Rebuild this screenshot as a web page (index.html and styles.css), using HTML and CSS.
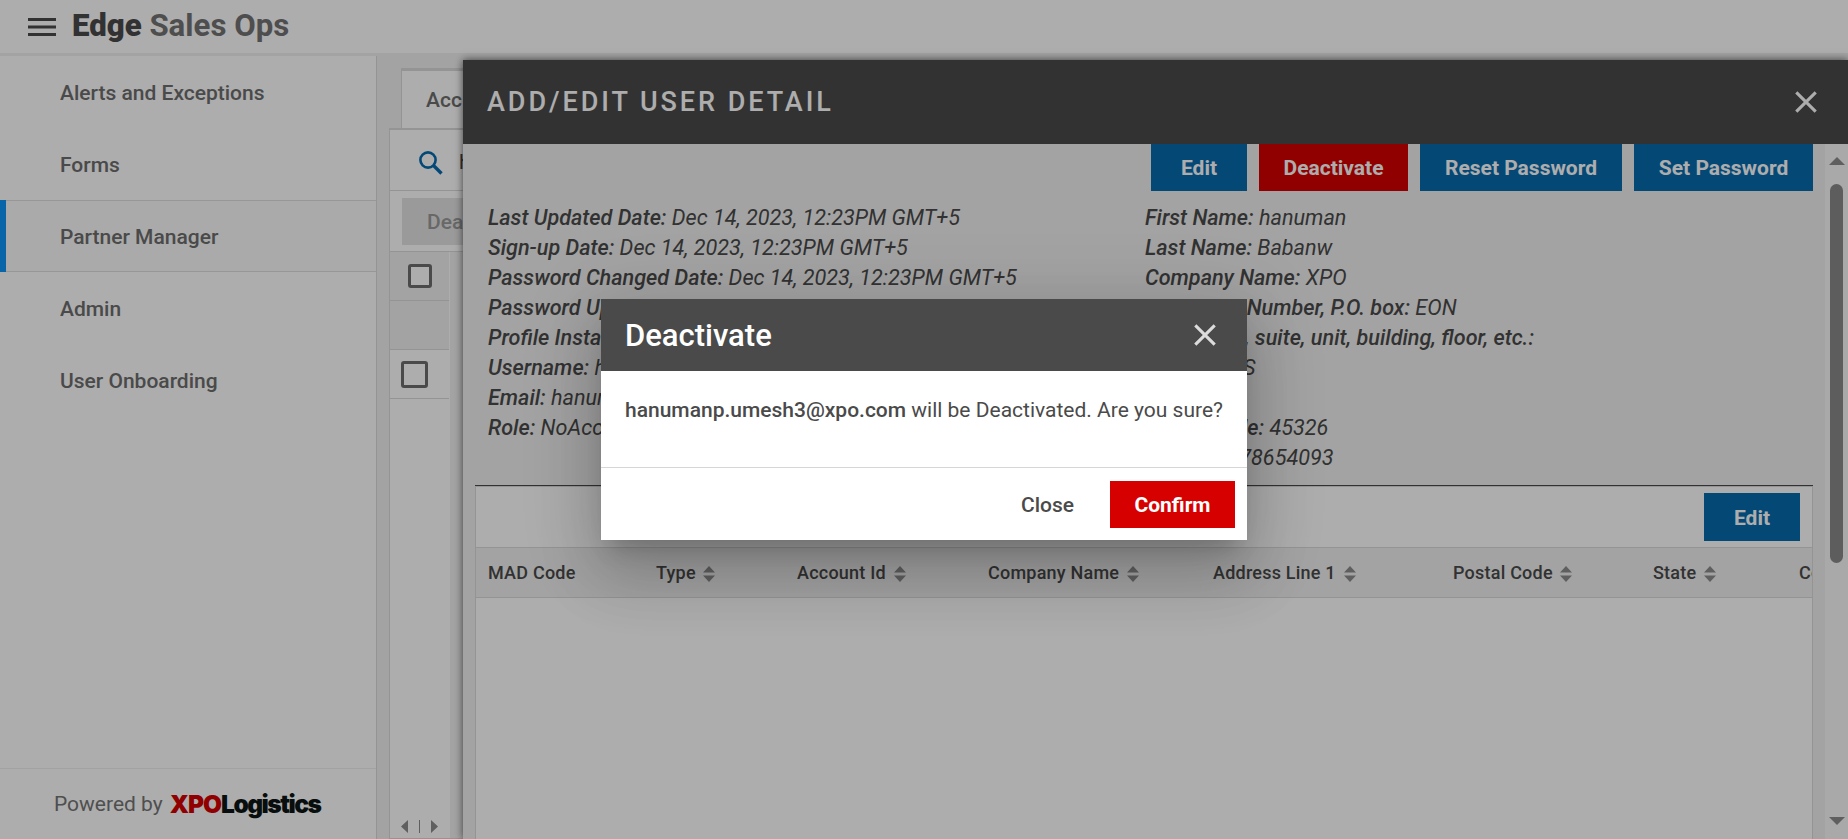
FILE: index.html
```html
<!DOCTYPE html>
<html lang="en">
<head>
<meta charset="utf-8">
<title>Edge Sales Ops</title>
<link rel="stylesheet" href="styles.css">
</head>
<body>
<svg width="0" height="0" class="defs">
  <symbol id="sort" viewBox="0 0 12 16"><path d="M6 0l6 6.5H0zM0 9.5h12L6 16z"/></symbol>
  <symbol id="cross" viewBox="0 0 22 22"><path d="M1.3 1.3l19.4 19.4M20.7 1.3L1.3 20.7" fill="none" stroke="currentColor" stroke-width="3.1"/></symbol>
</svg>
<div class="app">
  <header class="topbar">
    <svg class="menu" viewBox="0 0 28 18"><path d="M0 0h28v3H0zM0 7.5h28v3H0zM0 15h28v3H0z"/></svg>
    <h1 class="brand"><b>Edge</b> Sales Ops</h1>
  </header>
  <div class="content">
    <aside class="sidebar">
      <nav class="nav">
        <a class="nav-item">Alerts and Exceptions</a>
        <a class="nav-item">Forms</a>
        <a class="nav-item active">Partner Manager</a>
        <a class="nav-item">Admin</a>
        <a class="nav-item">User Onboarding</a>
      </nav>
      <div class="powered">Powered by <span class="logo"><span class="xpo">XPO</span><span class="logi">Logistics</span></span></div>
    </aside>
    <main class="main">
      <div class="tab">Acc</div>
      <section class="panel">
        <div class="search">
          <svg class="search-icon" viewBox="0 0 24 24"><circle cx="9" cy="9" r="7.6" fill="none" stroke="currentColor" stroke-width="2.6"/><path d="M14.5 14.5l8 8" stroke="currentColor" stroke-width="3.4"/></svg>
          <span>h</span>
        </div>
        <div class="actions"><span class="btn-disabled">Dea</span></div>
        <div class="rows">
          <div class="row grey first"><i class="check small"></i></div>
          <div class="row grey"></div>
          <div class="row"><i class="check"></i></div>
          <div class="pager">
            <svg viewBox="0 0 38 13"><path d="M8 0v13L1 6.5zM19 0h1v13h-1zM31 0v13l7-6.5z"/></svg>
          </div>
        </div>
      </section>
    </main>
  </div>
</div>

<section class="drawer">
  <header class="drawer-head">
    <h2>ADD/EDIT USER DETAIL</h2>
    <svg class="cross"><use href="#cross"/></svg>
  </header>
  <div class="drawer-body">
    <div class="drawer-main">
      <div class="buttons">
        <button class="btn wide">Edit</button>
        <button class="btn red deactivate">Deactivate</button>
        <button class="btn reset">Reset Password</button>
        <button class="btn set">Set Password</button>
      </div>
      <div class="details">
        <div class="col">
          <p><b>Last Updated Date:</b> Dec 14, 2023, 12:23PM GMT+5</p>
          <p><b>Sign-up Date:</b> Dec 14, 2023, 12:23PM GMT+5</p>
          <p><b>Password Changed Date:</b> Dec 14, 2023, 12:23PM GMT+5</p>
          <p><b>Password Up</b></p>
          <p><b>Profile Insta</b></p>
          <p><b>Username:</b> ha</p>
          <p><b>Email:</b> hanum</p>
          <p><b>Role:</b> NoAcc</p>
        </div>
        <div class="col">
          <p><b>First Name:</b> hanuman</p>
          <p><b>Last Name:</b> Babanw</p>
          <p><b>Company Name:</b> XPO</p>
          <p><b>Street and Number, P.O. box:</b> EON</p>
          <p><b>Apartment, suite, unit, building, floor, etc.:</b></p>
          <p><b>City:</b> TEXAS</p>
          <p><b>State:</b></p>
          <p><b>Postal Code:</b> 45326</p>
          <p><b>Phone:</b> 9878654093</p>
        </div>
      </div>
      <div class="grid">
        <div class="grid-bar"><button class="btn wide tall">Edit</button></div>
        <div class="grid-head">
          <span class="c1">MAD Code</span>
          <span class="c2">Type <svg><use href="#sort"/></svg></span>
          <span class="c3">Account Id <svg><use href="#sort"/></svg></span>
          <span class="c4">Company Name <svg><use href="#sort"/></svg></span>
          <span class="c5">Address Line 1 <svg><use href="#sort"/></svg></span>
          <span class="c6">Postal Code <svg><use href="#sort"/></svg></span>
          <span class="c7">State <svg><use href="#sort"/></svg></span>
          <span class="c8">Co</span>
        </div>
      </div>
    </div>
    <div class="scroll">
      <svg class="arrow" viewBox="0 0 16 8"><path d="M8 0l8 8H0z"/></svg>
      <div class="thumb"></div>
      <svg class="arrow down" viewBox="0 0 16 8"><path d="M0 0h16L8 8z"/></svg>
    </div>
  </div>
</section>

<div class="overlay"></div>

<section class="modal">
  <header class="modal-head">
    <h3>Deactivate</h3>
    <svg class="cross"><use href="#cross"/></svg>
  </header>
  <p class="modal-body"><b>hanumanp.umesh3@xpo.com</b> will be Deactivated. Are you sure?</p>
  <footer class="modal-foot">
    <button class="link">Close</button>
    <button class="btn red confirm">Confirm</button>
  </footer>
</section>
</body>
</html>
```
FILE: styles.css
```css
* { box-sizing: border-box; }
body {
  margin: 0;
  height: 839px;
  overflow: hidden;
  font-family: Roboto, sans-serif;
  font-size: 21px;
  color: #6d6d6d;
  background: #f1f1f1;
}
h1, h2, h3, p { margin: 0; }
.defs { position: absolute; }

.app { display: flex; flex-direction: column; height: 839px; }
.topbar {
  display: flex;
  align-items: center;
  height: 56px;
  flex: none;
  padding-left: 28px;
  background: #fff;
  border-bottom: 3px solid #f1f1f1;
}
.menu { width: 28px; height: 18px; fill: #4a4a4a; }
.brand {
  margin-left: 16px;
  padding-bottom: 2px;
  font-size: 31.2px;
  line-height: 48px;
  font-weight: 700;
  color: #737373;
}
.brand b { color: #4a4a4a; }

.content { display: flex; flex: 1; min-height: 0; }
.sidebar {
  display: flex;
  flex-direction: column;
  width: 377px;
  flex: none;
  background: #fff;
  border-right: 1px solid #dadada;
}
.nav { flex: 1; }
.nav-item {
  display: flex;
  align-items: center;
  height: 72px;
  padding-left: 60px;
  padding-top: 2px;
  font-weight: 500;
  line-height: 25px;
}
.nav-item.active {
  background: linear-gradient(90deg, #0c96f7 6px, #fbfbfb 6px);
  box-shadow: inset 0 1px 0 #dfdfdf, inset 0 -1px 0 #dfdfdf;
  position: relative;
}
.nav-item.active::before {
  content: "";
  position: absolute;
  left: 0;
  top: 0;
  width: 6px;
  height: 72px;
  background: #0c96f7;
}
.powered {
  display: flex;
  align-items: center;
  height: 71px;
  padding-left: 54px;
  border-top: 1px solid #efefef;
  color: #757575;
}
.logo {
  display: flex;
  margin-left: 7px;
  font: 900 24.5px/28px Inter, sans-serif;
}
.xpo { color: #d60000; letter-spacing: -1px; }
.logi { color: #0c1414; letter-spacing: -1.5px; }

.main {
  flex: 1;
  display: flex;
  flex-direction: column;
  padding: 12px 0 0 12px;
}
.tab {
  width: 180px;
  height: 60px;
  margin-left: 12px;
  padding: 0 0 0 24px;
  background: #fff;
  border-top: 3px solid #dadada;
  border-left: 1px solid #dadada;
  font-weight: 500;
  line-height: 58px;
}
.panel {
  flex: 1;
  display: flex;
  flex-direction: column;
  border: 1px solid #dadada;
  border-top-width: 2px;
  background: #fff;
}
.search {
  display: flex;
  align-items: center;
  height: 61px;
  padding-left: 29px;
  border-bottom: 1px solid #dadada;
  color: #4a4a4a;
  line-height: 26px;
}
.search span { padding-top: 3px; }
.search-icon { width: 24px; height: 24px; margin: 5px 16px 0 0; color: #066aaf; }
.actions { height: 61px; padding: 7px 12px; border-bottom: 1px solid #dadada; }
.btn-disabled {
  display: block;
  width: 149px;
  height: 47px;
  padding-left: 25px;
  background: #e4e4e4;
  color: #9a9a9a;
  font-weight: 500;
  line-height: 48px;
}
.rows { flex: 1; display: flex; flex-direction: column; width: 59px; box-shadow: 100px 0 0 40px #f1f1f1; clip-path: inset(0 -120px 0 0); }
.row { display: flex; align-items: center; height: 49px; padding-left: 11px; border-bottom: 1px solid #dadada; }
.row.grey { background: #f1f1f1; }
.row.first { padding-left: 18px; }
.check { width: 27px; height: 27px; border: 3px solid #6d6d6d; border-radius: 3px; }
.check.small { width: 24px; height: 24px; background: #fff; }
.pager { flex: 1; display: flex; align-items: flex-end; padding: 0 0 5px 10px; }
.pager svg { width: 38px; height: 13px; fill: #8c8c8c; flex: none; }

.drawer {
  position: absolute;
  left: 463px;
  top: 60px;
  width: 1385px;
  height: 779px;
  display: flex;
  flex-direction: column;
  background: #f1f1f1;
  box-shadow: 0 0 8px rgba(0, 0, 0, .65);
  color: #4a4a4a;
}
.drawer-head {
  display: flex;
  align-items: center;
  justify-content: space-between;
  height: 84px;
  padding: 0 31px 0 24px;
  background: #4a4a4a;
  color: #fff;
}
.drawer-head h2 { font-size: 27px; font-weight: 500; letter-spacing: 2.95px; line-height: 36px; }
.cross { width: 22px; height: 22px; }
.drawer-body { flex: 1; display: flex; min-height: 0; }
.drawer-main { flex: 1; display: flex; flex-direction: column; min-width: 0; padding: 0 12px; }
.buttons { display: flex; justify-content: flex-end; gap: 12px; height: 47px; }
.btn {
  height: 47px;
  padding: 2px 0 0;
  border: 0;
  background: #066aaf;
  color: #fff;
  font: 700 21px/45px Roboto, sans-serif;
}
.btn.wide { width: 96px; }
.btn.tall { height: 48px; }
.btn.red { background: #d60000; }
.btn.deactivate { width: 149px; }
.btn.reset { width: 202px; }
.btn.set { width: 179px; }
.btn.confirm { width: 125px; }

.details { display: flex; padding: 12px 0 0 13px; height: 294px; font-style: italic; font-size: 21.62px; }
.details p { height: 30px; line-height: 30.5px; white-space: nowrap; }
.details b { font-weight: 500; }
.details .col { width: 657px; }

.grid {
  flex: 1;
  border: 1px solid #dadada;
  border-bottom: 0;
  background: #fff;
  box-shadow: 0 -1px 0 #4a4a4a;
  margin-top: 1px;
}
.grid-bar { display: flex; justify-content: flex-end; height: 61px; padding: 6px 12px; border-bottom: 1px solid #dadada; }
.grid-head {
  display: flex;
  height: 50px;
  padding-left: 12px;
  background: #f1f1f1;
  border-bottom: 1px solid #dadada;
  font-size: 18px;
  font-weight: 500;
  letter-spacing: .22px;
  line-height: 49px;
  overflow: hidden;
}
.grid-head span { flex: none; white-space: nowrap; }
.grid-head svg { width: 12px; height: 16px; margin-left: 3px; vertical-align: -3px; fill: #8c8c8c; }
.c1 { width: 168px; }
.c2 { width: 141px; }
.c3 { width: 191px; }
.c4 { width: 225px; }
.c5 { width: 240px; }
.c6 { width: 200px; }
.c7 { width: 146px; }

.scroll {
  width: 23px;
  display: flex;
  flex-direction: column;
  align-items: center;
  padding: 13px 0 14px;
  background: #fafafa;
}
.arrow { width: 16px; height: 8px; fill: #8c8c8c; }
.arrow.down { margin-top: auto; }
.thumb { width: 13px; height: 379px; margin-top: 19px; border-radius: 7px; background: #8a8a8a; }

.overlay { position: absolute; inset: 0; background: rgba(0, 0, 0, .32); }

.modal {
  position: absolute;
  left: 601px;
  top: 299px;
  width: 646px;
  height: 241px;
  background: #fff;
  color: #4a4a4a;
  box-shadow: 0 16px 22px -10px rgba(0, 0, 0, .2), 0 36px 57px 4px rgba(0, 0, 0, .14), 0 13px 69px 12px rgba(0, 0, 0, .12);
}
.modal-head {
  display: flex;
  align-items: center;
  justify-content: space-between;
  height: 72px;
  padding: 0 31px 0 24px;
  background: #4a4a4a;
  color: #fff;
}
.modal-head h3 { font-size: 31px; font-weight: 500; }
.modal-head .cross { color: #dcdcdc; }
.modal-body { height: 97px; padding: 24px 0 0 24px; line-height: 31px; white-space: nowrap; border-bottom: 1px solid #d6d6d6; }
.modal-body b { font-weight: 500; }
.modal-foot { display: flex; justify-content: flex-end; height: 72px; padding: 13px 12px 0; gap: 12px; }
.link { height: 47px; padding: 0 24px; border: 0; background: none; color: #4a4a4a; font: 500 21px/46px Roboto, sans-serif; }
```
